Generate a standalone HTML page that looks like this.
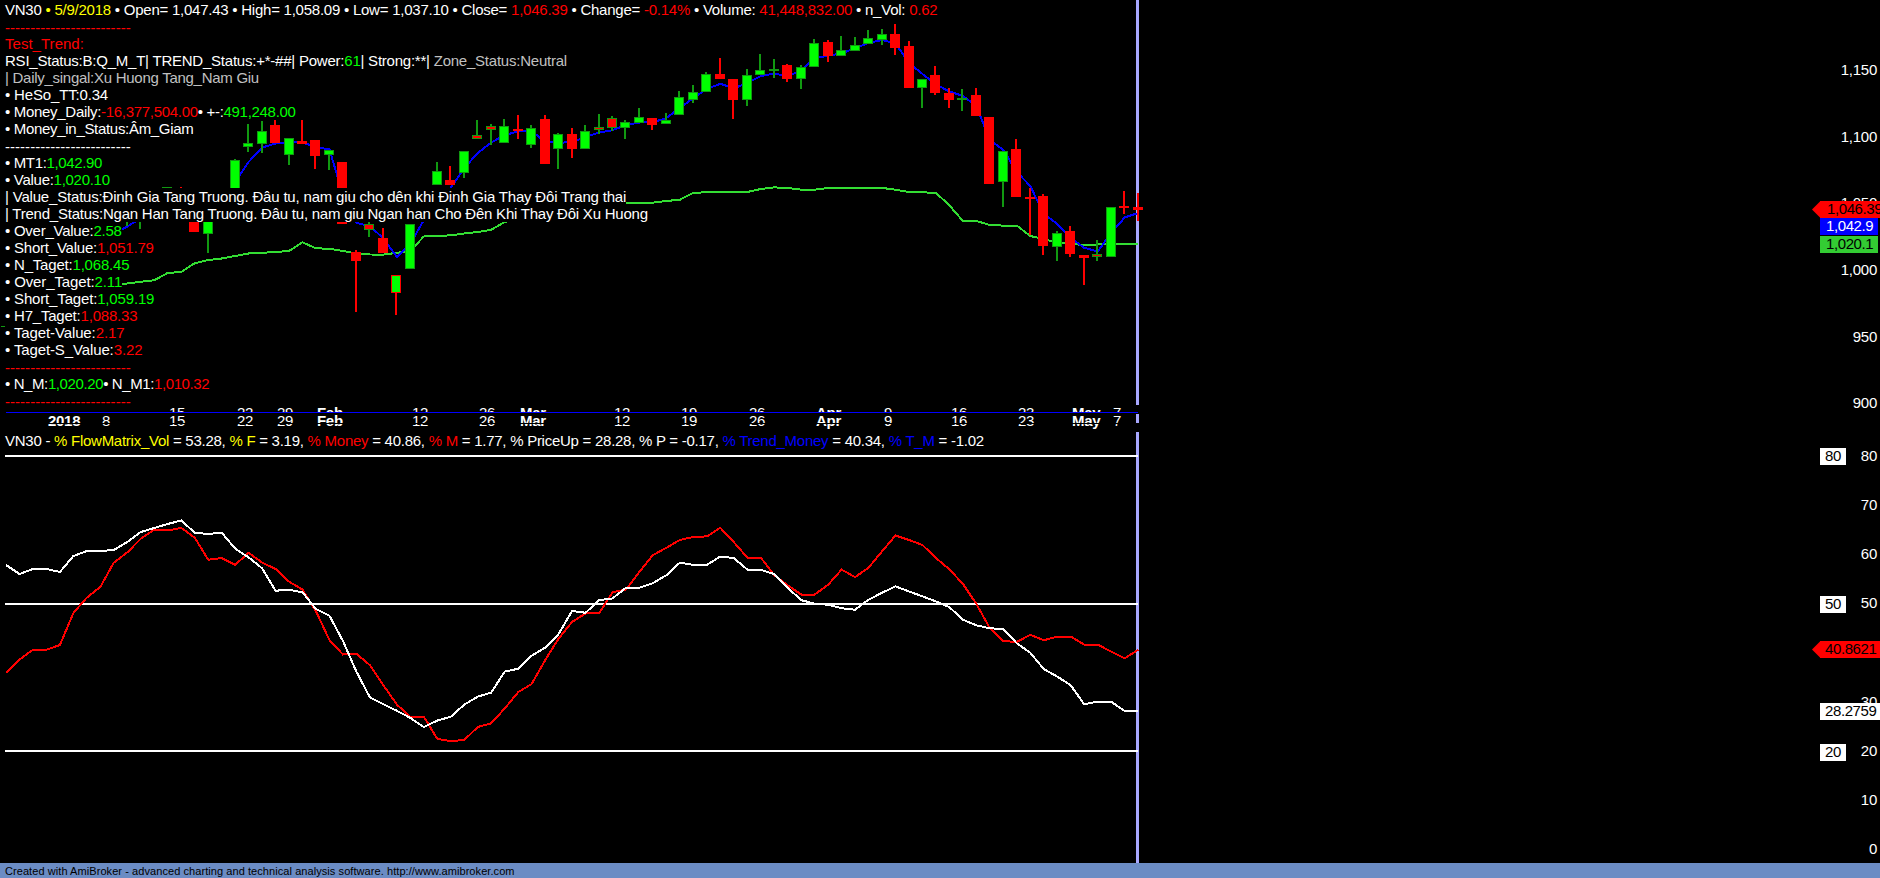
<!DOCTYPE html>
<html><head><meta charset="utf-8">
<style>
html,body{margin:0;padding:0;background:#000;width:1880px;height:878px;overflow:hidden;position:relative}
body{font-family:"Liberation Sans",sans-serif;}
.t{position:absolute;left:5px;height:17px;line-height:17px;font-size:15px;white-space:nowrap;background:#000}
.xl{position:absolute;font-size:15px;line-height:17px;color:#fff;white-space:nowrap;letter-spacing:-0.3px}
.yl{position:absolute;right:3px;font-size:15px;line-height:17px;color:#fff;white-space:nowrap;text-align:right;letter-spacing:-0.25px}
.lbl{position:absolute;font-size:15px;line-height:15px;white-space:nowrap;box-sizing:border-box;letter-spacing:-0.4px;overflow:hidden}
.vl{position:absolute;left:1136px;width:3px;background:#a8a8ff}
</style></head><body>
<div class="vl" style="top:0;height:405px"></div>
<div class="vl" style="top:414px;height:9px"></div>
<div class="vl" style="top:432px;height:431px"></div>
<div style="position:absolute;left:0;top:0;width:1880px;height:410px;overflow:hidden"><svg width="1880" height="878" style="position:absolute;left:0;top:0" shape-rendering="crispEdges">
<polyline fill="none" stroke="#33dd33" stroke-width="2" points="100.3,290.1 113.8,285.0 127.3,283.5 140.8,281.7 154.3,280.3 167.7,272.9 181.2,272.1 194.7,263.2 208.2,260.0 221.6,258.5 235.1,256.0 248.6,253.5 262.1,252.8 275.6,252.0 289.0,251.0 302.5,242.3 316.0,248.3 329.5,248.8 342.9,251.0 356.4,253.5 369.9,254.5 383.4,254.6 396.9,252.8 410.3,251.0 423.8,236.5 437.3,236.0 450.8,235.3 464.3,233.5 477.7,232.0 491.2,229.8 504.7,222.0 518.2,218.0 531.6,215.0 545.1,212.0 558.6,210.0 572.1,208.0 585.6,206.0 599.0,205.0 612.5,204.0 626.0,203.2 639.5,203.0 652.9,202.6 666.4,201.0 679.9,199.7 693.4,192.9 706.9,192.2 720.3,192.0 733.8,192.0 747.3,192.0 760.8,189.0 774.2,187.4 787.7,188.0 801.2,189.7 814.7,189.7 828.2,187.9 841.6,187.9 855.1,187.9 868.6,187.9 882.1,187.9 895.5,189.7 909.0,192.0 922.5,192.3 936.0,192.9 949.5,205.5 962.9,221.0 976.4,221.0 989.9,225.0 1003.4,225.6 1016.8,225.6 1030.3,236.0 1043.8,239.0 1057.3,242.7 1070.8,244.0 1084.2,245.0 1097.7,244.5 1111.2,244.2 1124.7,244.1 1138.2,244.1"/>
<rect x="1" y="326" width="4" height="1" fill="#119911"/>
<polyline fill="none" stroke="#0000ff" stroke-width="2" points="113.8,234.0 127.3,226.5 140.8,218.0 154.3,212.0 167.7,208.0 181.2,205.0 194.7,203.0 208.2,203.0 221.6,205.0 235.1,182.0 248.6,162.0 262.1,147.5 275.6,143.5 289.0,142.0 302.5,142.5 316.0,147.0 329.5,149.5 342.9,195.0 356.4,223.0 369.9,226.0 383.4,238.5 396.9,257.0 410.3,244.0 423.8,220.0 437.3,203.0 450.8,187.7 464.3,168.0 477.7,153.0 491.2,142.5 504.7,135.0 518.2,131.5 531.6,131.0 545.1,141.8 558.6,142.8 572.1,142.0 585.6,137.0 599.0,132.5 612.5,130.2 626.0,125.0 639.5,122.5 652.9,122.3 666.4,118.0 679.9,108.0 693.4,98.0 706.9,89.0 720.3,83.8 733.8,88.3 747.3,83.0 760.8,76.0 774.2,73.5 787.7,76.5 801.2,70.0 814.7,58.5 828.2,55.5 841.6,53.5 855.1,48.0 868.6,43.0 882.1,40.0 895.5,43.5 909.0,63.0 922.5,74.0 936.0,84.5 949.5,91.5 962.9,96.0 976.4,106.0 989.9,140.0 1003.4,150.0 1016.8,172.0 1030.3,186.0 1043.8,214.0 1057.3,224.0 1070.8,238.0 1084.2,247.8 1097.7,251.5 1111.2,233.0 1124.7,217.5 1138.2,213.0"/>
<rect x="126" y="215" width="2" height="11" fill="#119911"/>
<rect x="139" y="215" width="2" height="14" fill="#119911"/>
<rect x="166" y="187" width="2" height="18" fill="#119911"/>
<rect x="162" y="187" width="10" height="18" fill="#119911"/>
<rect x="163" y="188" width="8" height="16" fill="#00ff00"/>
<rect x="180" y="187" width="2" height="18" fill="#ff0000"/>
<rect x="176" y="195" width="10" height="10" fill="#ff0000"/>
<rect x="177" y="196" width="8" height="8" fill="#ff0000"/>
<rect x="193" y="210" width="2" height="22" fill="#ff0000"/>
<rect x="189" y="210" width="10" height="22" fill="#ff0000"/>
<rect x="190" y="211" width="8" height="20" fill="#ff0000"/>
<rect x="207" y="210" width="2" height="43" fill="#119911"/>
<rect x="203" y="210" width="10" height="24" fill="#119911"/>
<rect x="204" y="211" width="8" height="22" fill="#00ff00"/>
<rect x="234" y="159" width="2" height="41" fill="#119911"/>
<rect x="230" y="160" width="10" height="40" fill="#119911"/>
<rect x="231" y="161" width="8" height="38" fill="#00ff00"/>
<rect x="247" y="124" width="2" height="28" fill="#119911"/>
<rect x="243" y="143" width="10" height="4" fill="#119911"/>
<rect x="244" y="144" width="8" height="2" fill="#00ff00"/>
<rect x="261" y="121" width="2" height="32" fill="#119911"/>
<rect x="257" y="131" width="10" height="13" fill="#119911"/>
<rect x="258" y="132" width="8" height="11" fill="#00ff00"/>
<rect x="274" y="120" width="2" height="23" fill="#ff0000"/>
<rect x="270" y="125" width="10" height="18" fill="#ff0000"/>
<rect x="271" y="126" width="8" height="16" fill="#ff0000"/>
<rect x="288" y="138" width="2" height="27" fill="#119911"/>
<rect x="284" y="138" width="10" height="17" fill="#119911"/>
<rect x="285" y="139" width="8" height="15" fill="#00ff00"/>
<rect x="301" y="120" width="2" height="24" fill="#ff0000"/>
<rect x="297" y="141" width="10" height="3" fill="#ff0000"/>
<rect x="298" y="142" width="8" height="1" fill="#ff0000"/>
<rect x="314" y="140" width="2" height="29" fill="#ff0000"/>
<rect x="310" y="140" width="10" height="16" fill="#ff0000"/>
<rect x="311" y="141" width="8" height="14" fill="#ff0000"/>
<rect x="328" y="150" width="2" height="20" fill="#119911"/>
<rect x="324" y="150" width="10" height="5" fill="#119911"/>
<rect x="325" y="151" width="8" height="3" fill="#00ff00"/>
<rect x="341" y="162" width="2" height="62" fill="#ff0000"/>
<rect x="337" y="162" width="10" height="62" fill="#ff0000"/>
<rect x="338" y="163" width="8" height="60" fill="#ff0000"/>
<rect x="355" y="250" width="2" height="62" fill="#ff0000"/>
<rect x="351" y="252" width="10" height="9" fill="#ff0000"/>
<rect x="352" y="253" width="8" height="7" fill="#ff0000"/>
<rect x="368" y="222" width="2" height="15" fill="#119911"/>
<rect x="364" y="224" width="10" height="6" fill="#119911"/>
<rect x="365" y="225" width="8" height="4" fill="#ff0000"/>
<rect x="382" y="228" width="2" height="25" fill="#ff0000"/>
<rect x="378" y="238" width="10" height="15" fill="#ff0000"/>
<rect x="379" y="239" width="8" height="13" fill="#ff0000"/>
<rect x="395" y="275" width="2" height="40" fill="#ff0000"/>
<rect x="391" y="275" width="10" height="18" fill="#ff0000"/>
<rect x="392" y="276" width="8" height="16" fill="#00ff00"/>
<rect x="409" y="224" width="2" height="45" fill="#119911"/>
<rect x="405" y="224" width="10" height="45" fill="#119911"/>
<rect x="406" y="225" width="8" height="43" fill="#00ff00"/>
<rect x="436" y="162" width="2" height="23" fill="#119911"/>
<rect x="432" y="171" width="10" height="14" fill="#119911"/>
<rect x="433" y="172" width="8" height="12" fill="#00ff00"/>
<rect x="449" y="166" width="2" height="19" fill="#ff0000"/>
<rect x="445" y="180" width="10" height="5" fill="#ff0000"/>
<rect x="446" y="181" width="8" height="3" fill="#ff0000"/>
<rect x="463" y="151" width="2" height="27" fill="#119911"/>
<rect x="459" y="151" width="10" height="22" fill="#119911"/>
<rect x="460" y="152" width="8" height="20" fill="#00ff00"/>
<rect x="476" y="120" width="2" height="19" fill="#119911"/>
<rect x="472" y="135" width="10" height="4" fill="#119911"/>
<rect x="473" y="136" width="8" height="2" fill="#ff0000"/>
<rect x="490" y="124" width="2" height="21" fill="#119911"/>
<rect x="486" y="126" width="10" height="4" fill="#119911"/>
<rect x="487" y="127" width="8" height="2" fill="#ff0000"/>
<rect x="503" y="119" width="2" height="24" fill="#119911"/>
<rect x="499" y="126" width="10" height="17" fill="#119911"/>
<rect x="500" y="127" width="8" height="15" fill="#00ff00"/>
<rect x="517" y="115" width="2" height="24" fill="#ff0000"/>
<rect x="513" y="129" width="10" height="2" fill="#ff0000"/>
<rect x="530" y="125" width="2" height="23" fill="#119911"/>
<rect x="526" y="128" width="10" height="17" fill="#119911"/>
<rect x="527" y="129" width="8" height="15" fill="#00ff00"/>
<rect x="544" y="115" width="2" height="49" fill="#ff0000"/>
<rect x="540" y="119" width="10" height="45" fill="#ff0000"/>
<rect x="541" y="120" width="8" height="43" fill="#ff0000"/>
<rect x="557" y="133" width="2" height="36" fill="#119911"/>
<rect x="553" y="134" width="10" height="15" fill="#119911"/>
<rect x="554" y="135" width="8" height="13" fill="#00ff00"/>
<rect x="571" y="128" width="2" height="30" fill="#ff0000"/>
<rect x="567" y="134" width="10" height="15" fill="#ff0000"/>
<rect x="568" y="135" width="8" height="13" fill="#ff0000"/>
<rect x="584" y="125" width="2" height="24" fill="#119911"/>
<rect x="580" y="131" width="10" height="18" fill="#119911"/>
<rect x="581" y="132" width="8" height="16" fill="#00ff00"/>
<rect x="598" y="114" width="2" height="20" fill="#119911"/>
<rect x="594" y="127" width="10" height="3" fill="#119911"/>
<rect x="595" y="128" width="8" height="1" fill="#ff0000"/>
<rect x="611" y="116" width="2" height="15" fill="#119911"/>
<rect x="607" y="118" width="10" height="10" fill="#119911"/>
<rect x="608" y="119" width="8" height="8" fill="#ff0000"/>
<rect x="624" y="120" width="2" height="19" fill="#119911"/>
<rect x="620" y="122" width="10" height="6" fill="#119911"/>
<rect x="621" y="123" width="8" height="4" fill="#00ff00"/>
<rect x="638" y="108" width="2" height="15" fill="#119911"/>
<rect x="634" y="117" width="10" height="6" fill="#119911"/>
<rect x="635" y="118" width="8" height="4" fill="#00ff00"/>
<rect x="651" y="118" width="2" height="12" fill="#ff0000"/>
<rect x="647" y="118" width="10" height="7" fill="#ff0000"/>
<rect x="648" y="119" width="8" height="5" fill="#ff0000"/>
<rect x="665" y="113" width="2" height="11" fill="#119911"/>
<rect x="661" y="120" width="10" height="4" fill="#119911"/>
<rect x="662" y="121" width="8" height="2" fill="#00ff00"/>
<rect x="678" y="91" width="2" height="24" fill="#119911"/>
<rect x="674" y="97" width="10" height="18" fill="#119911"/>
<rect x="675" y="98" width="8" height="16" fill="#00ff00"/>
<rect x="692" y="85" width="2" height="18" fill="#119911"/>
<rect x="688" y="92" width="10" height="8" fill="#119911"/>
<rect x="689" y="93" width="8" height="6" fill="#00ff00"/>
<rect x="705" y="72" width="2" height="20" fill="#119911"/>
<rect x="701" y="74" width="10" height="18" fill="#119911"/>
<rect x="702" y="75" width="8" height="16" fill="#00ff00"/>
<rect x="719" y="58" width="2" height="21" fill="#ff0000"/>
<rect x="715" y="74" width="10" height="5" fill="#ff0000"/>
<rect x="716" y="75" width="8" height="3" fill="#ff0000"/>
<rect x="732" y="79" width="2" height="40" fill="#ff0000"/>
<rect x="728" y="79" width="10" height="21" fill="#ff0000"/>
<rect x="729" y="80" width="8" height="19" fill="#ff0000"/>
<rect x="746" y="69" width="2" height="37" fill="#119911"/>
<rect x="742" y="75" width="10" height="25" fill="#119911"/>
<rect x="743" y="76" width="8" height="23" fill="#00ff00"/>
<rect x="759" y="54" width="2" height="21" fill="#119911"/>
<rect x="755" y="70" width="10" height="5" fill="#119911"/>
<rect x="756" y="71" width="8" height="3" fill="#00ff00"/>
<rect x="773" y="59" width="2" height="19" fill="#119911"/>
<rect x="769" y="69" width="10" height="2" fill="#119911"/>
<rect x="786" y="64" width="2" height="18" fill="#ff0000"/>
<rect x="782" y="65" width="10" height="14" fill="#ff0000"/>
<rect x="783" y="66" width="8" height="12" fill="#ff0000"/>
<rect x="800" y="65" width="2" height="24" fill="#119911"/>
<rect x="796" y="67" width="10" height="12" fill="#119911"/>
<rect x="797" y="68" width="8" height="10" fill="#00ff00"/>
<rect x="813" y="39" width="2" height="28" fill="#119911"/>
<rect x="809" y="43" width="10" height="24" fill="#119911"/>
<rect x="810" y="44" width="8" height="22" fill="#00ff00"/>
<rect x="827" y="40" width="2" height="22" fill="#ff0000"/>
<rect x="823" y="42" width="10" height="14" fill="#ff0000"/>
<rect x="824" y="43" width="8" height="12" fill="#ff0000"/>
<rect x="840" y="36" width="2" height="20" fill="#119911"/>
<rect x="836" y="50" width="10" height="6" fill="#119911"/>
<rect x="837" y="51" width="8" height="4" fill="#00ff00"/>
<rect x="854" y="37" width="2" height="14" fill="#119911"/>
<rect x="850" y="45" width="10" height="6" fill="#119911"/>
<rect x="851" y="46" width="8" height="4" fill="#00ff00"/>
<rect x="867" y="30" width="2" height="14" fill="#119911"/>
<rect x="863" y="38" width="10" height="6" fill="#119911"/>
<rect x="864" y="39" width="8" height="4" fill="#00ff00"/>
<rect x="881" y="29" width="2" height="16" fill="#119911"/>
<rect x="877" y="34" width="10" height="6" fill="#119911"/>
<rect x="878" y="35" width="8" height="4" fill="#00ff00"/>
<rect x="894" y="24" width="2" height="31" fill="#ff0000"/>
<rect x="890" y="34" width="10" height="14" fill="#ff0000"/>
<rect x="891" y="35" width="8" height="12" fill="#ff0000"/>
<rect x="908" y="41" width="2" height="47" fill="#ff0000"/>
<rect x="904" y="46" width="10" height="42" fill="#ff0000"/>
<rect x="905" y="47" width="8" height="40" fill="#ff0000"/>
<rect x="921" y="79" width="2" height="29" fill="#119911"/>
<rect x="917" y="79" width="10" height="9" fill="#119911"/>
<rect x="918" y="80" width="8" height="7" fill="#00ff00"/>
<rect x="934" y="66" width="2" height="29" fill="#ff0000"/>
<rect x="930" y="75" width="10" height="18" fill="#ff0000"/>
<rect x="931" y="76" width="8" height="16" fill="#ff0000"/>
<rect x="948" y="88" width="2" height="20" fill="#ff0000"/>
<rect x="944" y="93" width="10" height="7" fill="#ff0000"/>
<rect x="945" y="94" width="8" height="5" fill="#ff0000"/>
<rect x="961" y="89" width="2" height="22" fill="#119911"/>
<rect x="957" y="98" width="10" height="2" fill="#119911"/>
<rect x="975" y="88" width="2" height="28" fill="#ff0000"/>
<rect x="971" y="95" width="10" height="21" fill="#ff0000"/>
<rect x="972" y="96" width="8" height="19" fill="#ff0000"/>
<rect x="988" y="117" width="2" height="67" fill="#ff0000"/>
<rect x="984" y="117" width="10" height="67" fill="#ff0000"/>
<rect x="985" y="118" width="8" height="65" fill="#ff0000"/>
<rect x="1002" y="151" width="2" height="56" fill="#119911"/>
<rect x="998" y="151" width="10" height="31" fill="#119911"/>
<rect x="999" y="152" width="8" height="29" fill="#00ff00"/>
<rect x="1015" y="139" width="2" height="58" fill="#ff0000"/>
<rect x="1011" y="149" width="10" height="48" fill="#ff0000"/>
<rect x="1012" y="150" width="8" height="46" fill="#ff0000"/>
<rect x="1029" y="188" width="2" height="47" fill="#ff0000"/>
<rect x="1025" y="197" width="10" height="2" fill="#ff0000"/>
<rect x="1042" y="194" width="2" height="61" fill="#ff0000"/>
<rect x="1038" y="196" width="10" height="50" fill="#ff0000"/>
<rect x="1039" y="197" width="8" height="48" fill="#ff0000"/>
<rect x="1056" y="231" width="2" height="30" fill="#119911"/>
<rect x="1052" y="233" width="10" height="14" fill="#119911"/>
<rect x="1053" y="234" width="8" height="12" fill="#00ff00"/>
<rect x="1069" y="226" width="2" height="31" fill="#ff0000"/>
<rect x="1065" y="231" width="10" height="23" fill="#ff0000"/>
<rect x="1066" y="232" width="8" height="21" fill="#ff0000"/>
<rect x="1083" y="255" width="2" height="30" fill="#ff0000"/>
<rect x="1079" y="255" width="10" height="3" fill="#ff0000"/>
<rect x="1080" y="256" width="8" height="1" fill="#ff0000"/>
<rect x="1096" y="240" width="2" height="21" fill="#119911"/>
<rect x="1092" y="254" width="10" height="3" fill="#119911"/>
<rect x="1093" y="255" width="8" height="1" fill="#ff0000"/>
<rect x="1110" y="207" width="2" height="50" fill="#119911"/>
<rect x="1106" y="207" width="10" height="50" fill="#119911"/>
<rect x="1107" y="208" width="8" height="48" fill="#00ff00"/>
<rect x="1123" y="191" width="2" height="23" fill="#ff0000"/>
<rect x="1119" y="206" width="10" height="2" fill="#ff0000"/>
<rect x="1137" y="193" width="2" height="28" fill="#ff0000"/>
<rect x="1133" y="207" width="10" height="3" fill="#ff0000"/>
<rect x="1134" y="208" width="8" height="1" fill="#ff0000"/>
</svg></div>

<svg width="1880" height="878" style="position:absolute;left:0;top:0" shape-rendering="crispEdges">
<rect x="5" y="455" width="1133" height="2" fill="#fff"/>
<rect x="5" y="603" width="1133" height="2" fill="#fff"/>
<rect x="5" y="750" width="1133" height="2" fill="#fff"/>
<polyline fill="none" stroke="#ff0000" stroke-width="2" points="6.0,673.0 19.5,659.5 33.0,649.7 46.4,649.7 59.9,645.0 73.4,613.0 86.9,597.5 100.3,587.0 113.8,562.6 127.3,552.4 140.8,538.7 154.3,529.6 167.7,530.5 181.2,527.8 194.7,537.6 208.2,559.7 221.6,558.1 235.1,564.9 248.6,552.8 262.1,562.6 275.6,569.0 289.0,581.6 302.5,589.6 316.0,611.3 329.5,640.2 342.9,654.5 356.4,653.8 369.9,665.2 383.4,685.3 396.9,704.6 410.3,716.7 423.8,716.7 437.3,738.8 450.8,741.1 464.3,740.0 477.7,727.0 491.2,723.3 504.7,708.5 518.2,692.1 531.6,684.1 545.1,660.2 558.6,638.6 572.1,621.9 585.6,613.4 599.0,613.4 612.5,592.3 626.0,589.5 639.5,571.8 652.9,555.1 666.4,547.8 679.9,539.9 693.4,536.9 706.9,536.4 720.3,527.8 733.8,542.1 747.3,557.6 760.8,557.6 774.2,575.2 787.7,585.4 801.2,594.5 814.7,594.5 828.2,584.7 841.6,569.6 855.1,577.1 868.6,567.6 882.1,551.3 895.5,535.5 909.0,540.0 922.5,545.0 936.0,558.1 949.5,569.4 962.9,583.9 976.4,604.0 989.9,628.3 1003.4,641.0 1016.8,642.0 1030.3,634.8 1043.8,640.3 1057.3,636.5 1070.8,636.5 1084.2,644.6 1097.7,644.6 1111.2,651.6 1124.7,658.3 1138.2,649.8"/>
<polyline fill="none" stroke="#ffffff" stroke-width="2" points="6.0,565.0 19.5,574.0 33.0,569.0 46.4,569.0 59.9,572.0 73.4,556.0 86.9,551.0 100.3,551.0 113.8,550.0 127.3,542.0 140.8,532.0 154.3,528.0 167.7,524.0 181.2,520.5 194.7,532.6 208.2,534.0 221.6,532.6 235.1,548.5 248.6,557.4 262.1,568.3 275.6,590.7 289.0,589.8 302.5,592.3 316.0,609.0 329.5,615.8 342.9,640.9 356.4,671.6 369.9,697.4 383.4,704.2 396.9,710.8 410.3,717.9 423.8,727.0 437.3,720.6 450.8,716.7 464.3,704.6 477.7,696.7 491.2,692.6 504.7,671.6 518.2,668.7 531.6,655.7 545.1,647.7 558.6,634.0 572.1,610.9 585.6,612.8 599.0,600.2 612.5,598.4 626.0,587.7 639.5,587.7 652.9,583.1 666.4,575.2 679.9,562.6 693.4,564.9 706.9,564.9 720.3,556.5 733.8,558.1 747.3,569.5 760.8,569.9 774.2,574.0 787.7,587.7 801.2,600.2 814.7,603.6 828.2,604.8 841.6,608.2 855.1,609.7 868.6,599.7 882.1,592.7 895.5,586.4 909.0,591.4 922.5,596.4 936.0,601.5 949.5,607.2 962.9,619.7 976.4,625.3 989.9,628.3 1003.4,629.0 1016.8,643.3 1030.3,652.8 1043.8,669.1 1057.3,676.6 1070.8,685.4 1084.2,704.2 1097.7,701.7 1111.2,701.7 1124.7,711.0 1138.2,711.0"/>
</svg>
<div style="position:absolute;left:0;top:405px;width:1136px;height:7px;overflow:hidden"><div class="xl" style="left:169px;top:-1px;font-weight:normal">15</div><div class="xl" style="left:237px;top:-1px;font-weight:normal">22</div><div class="xl" style="left:277px;top:-1px;font-weight:normal">29</div><div class="xl" style="left:317px;top:-1px;font-weight:bold">Feb</div><div class="xl" style="left:412px;top:-1px;font-weight:normal">12</div><div class="xl" style="left:479px;top:-1px;font-weight:normal">26</div><div class="xl" style="left:520px;top:-1px;font-weight:bold">Mar</div><div class="xl" style="left:614px;top:-1px;font-weight:normal">12</div><div class="xl" style="left:681px;top:-1px;font-weight:normal">19</div><div class="xl" style="left:749px;top:-1px;font-weight:normal">26</div><div class="xl" style="left:816px;top:-1px;font-weight:bold">Apr</div><div class="xl" style="left:884px;top:-1px;font-weight:normal">9</div><div class="xl" style="left:951px;top:-1px;font-weight:normal">16</div><div class="xl" style="left:1018px;top:-1px;font-weight:normal">23</div><div class="xl" style="left:1072px;top:-1px;font-weight:bold">May</div><div class="xl" style="left:1113px;top:-1px;font-weight:normal">7</div></div>
<div class="t" style="top:1px;letter-spacing:-0.241px"><span style="color:#ffffff">VN30</span><span style="color:#ffff00"> • 5/9/2018</span><span style="color:#ffffff"> • Open= 1,047.43 • High= 1,058.09 • Low= 1,037.10 • Close= </span><span style="color:#ff0000">1,046.39</span><span style="color:#ffffff"> • Change= </span><span style="color:#ff0000">-0.14%</span><span style="color:#ffffff"> • Volume: </span><span style="color:#ff0000">41,448,832.00</span><span style="color:#ffffff"> • n_Vol: </span><span style="color:#ff0000">0.62</span></div>
<div class="t" style="top:18px;letter-spacing:0.034px;padding-top:1px;height:16px"><span style="color:#ff0000">-------------------------</span></div>
<div class="t" style="top:35px;letter-spacing:0.025px"><span style="color:#ff0000">Test_Trend:</span></div>
<div class="t" style="top:52px;letter-spacing:-0.228px"><span style="color:#ffffff">RSI_Status:B:Q_M_T| TREND_Status:+*-##| Power:</span><span style="color:#00ff00">61</span><span style="color:#ffffff">| Strong:**|</span><span style="color:#c0c0c0"> Zone_Status:Neutral</span></div>
<div class="t" style="top:69px;letter-spacing:-0.273px"><span style="color:#c0c0c0">| Daily_singal:Xu Huong Tang_Nam Giu</span></div>
<div class="t" style="top:86px;letter-spacing:-0.163px"><span style="color:#ffffff">• HeSo_TT:0.34</span></div>
<div class="t" style="top:103px;letter-spacing:-0.304px"><span style="color:#ffffff">• Money_Daily:</span><span style="color:#ff0000">-16,377,504.00</span><span style="color:#ffffff">• +-:</span><span style="color:#00ff00">491,248.00</span></div>
<div class="t" style="top:120px;letter-spacing:-0.308px"><span style="color:#ffffff">• Money_in_Status:Âm_Giam</span></div>
<div class="t" style="top:137px;letter-spacing:0.034px;padding-top:1px;height:16px"><span style="color:#ffffff">-------------------------</span></div>
<div class="t" style="top:154px;letter-spacing:-0.353px"><span style="color:#ffffff">• MT1:</span><span style="color:#00ff00">1,042.90</span></div>
<div class="t" style="top:171px;letter-spacing:-0.282px"><span style="color:#ffffff">• Value:</span><span style="color:#00ff00">1,020.10</span></div>
<div class="t" style="top:188px;letter-spacing:-0.186px"><span style="color:#ffffff">| Value_Status:Đinh Gia Tang Truong. Đâu tu, nam giu cho dên khi Đinh Gia Thay Đôi Trang thai</span></div>
<div class="t" style="top:205px;letter-spacing:-0.231px"><span style="color:#ffffff">| Trend_Status:Ngan Han Tang Truong. Đâu tu, nam giu Ngan han Cho Đên Khi Thay Đôi Xu Huong</span></div>
<div class="t" style="top:222px;letter-spacing:-0.249px"><span style="color:#ffffff">• Over_Value:</span><span style="color:#00ff00">2.58</span></div>
<div class="t" style="top:239px;letter-spacing:-0.216px"><span style="color:#ffffff">• Short_Value:</span><span style="color:#ff0000">1,051.79</span></div>
<div class="t" style="top:256px;letter-spacing:-0.198px"><span style="color:#ffffff">• N_Taget:</span><span style="color:#00ff00">1,068.45</span></div>
<div class="t" style="top:273px;letter-spacing:-0.121px"><span style="color:#ffffff">• Over_Taget:</span><span style="color:#00ff00">2.11</span></div>
<div class="t" style="top:290px;letter-spacing:-0.165px"><span style="color:#ffffff">• Short_Taget:</span><span style="color:#00ff00">1,059.19</span></div>
<div class="t" style="top:307px;letter-spacing:-0.206px"><span style="color:#ffffff">• H7_Taget:</span><span style="color:#ff0000">1,088.33</span></div>
<div class="t" style="top:324px;letter-spacing:-0.115px"><span style="color:#ffffff">• Taget-Value:</span><span style="color:#ff0000">2.17</span></div>
<div class="t" style="top:341px;letter-spacing:-0.122px"><span style="color:#ffffff">• Taget-S_Value:</span><span style="color:#ff0000">3.22</span></div>
<div class="t" style="top:358px;letter-spacing:0.034px;padding-top:1px;height:16px"><span style="color:#ff0000">-------------------------</span></div>
<div class="t" style="top:375px;letter-spacing:-0.395px"><span style="color:#ffffff">• N_M:</span><span style="color:#00ff00">1,020.20</span><span style="color:#ffffff">• N_M1:</span><span style="color:#ff0000">1,010.32</span></div>
<div class="t" style="top:392px;letter-spacing:0.034px;padding-top:1px;height:16px"><span style="color:#ff0000">-------------------------</span></div>
<div style="position:absolute;left:6px;top:412px;width:1132px;height:1px;background:#0000ff"></div>
<div class="xl" style="left:48px;top:412px;font-weight:bold">2018</div>
<div class="xl" style="left:102px;top:412px;font-weight:normal">8</div>
<div class="xl" style="left:169px;top:412px;font-weight:normal">15</div>
<div class="xl" style="left:237px;top:412px;font-weight:normal">22</div>
<div class="xl" style="left:277px;top:412px;font-weight:normal">29</div>
<div class="xl" style="left:317px;top:412px;font-weight:bold">Feb</div>
<div class="xl" style="left:412px;top:412px;font-weight:normal">12</div>
<div class="xl" style="left:479px;top:412px;font-weight:normal">26</div>
<div class="xl" style="left:520px;top:412px;font-weight:bold">Mar</div>
<div class="xl" style="left:614px;top:412px;font-weight:normal">12</div>
<div class="xl" style="left:681px;top:412px;font-weight:normal">19</div>
<div class="xl" style="left:749px;top:412px;font-weight:normal">26</div>
<div class="xl" style="left:816px;top:412px;font-weight:bold">Apr</div>
<div class="xl" style="left:884px;top:412px;font-weight:normal">9</div>
<div class="xl" style="left:951px;top:412px;font-weight:normal">16</div>
<div class="xl" style="left:1018px;top:412px;font-weight:normal">23</div>
<div class="xl" style="left:1072px;top:412px;font-weight:bold">May</div>
<div class="xl" style="left:1113px;top:412px;font-weight:normal">7</div><div style="position:absolute;left:0;top:423px;width:1136px;height:1px;background:#000"></div>
<div class="t" style="top:432px;letter-spacing:-0.261px"><span style="color:#ffffff">VN30 - </span><span style="color:#ffff00">% FlowMatrix_Vol</span><span style="color:#ffffff"> = 53.28, </span><span style="color:#ffff00">% F</span><span style="color:#ffffff"> = 3.19, </span><span style="color:#ff0000">% Money</span><span style="color:#ffffff"> = 40.86, </span><span style="color:#ff0000">% M</span><span style="color:#ffffff"> = 1.77, % PriceUp = 28.28, % P = -0.17, </span><span style="color:#0000ff">% Trend_Money</span><span style="color:#ffffff"> = 40.34, </span><span style="color:#0000ff">% T_M</span><span style="color:#ffffff"> = -1.02</span></div>
<div class="yl" style="top:61px">1,150</div>
<div class="yl" style="top:128px">1,100</div>
<div class="yl" style="top:194px">1,050</div>
<div class="yl" style="top:261px">1,000</div>
<div class="yl" style="top:328px">950</div>
<div class="yl" style="top:394px">900</div>
<div class="yl" style="top:447px">80</div>
<div class="yl" style="top:496px">70</div>
<div class="yl" style="top:545px">60</div>
<div class="yl" style="top:594px">50</div>
<div class="yl" style="top:693px">30</div>
<div class="yl" style="top:742px">20</div>
<div class="yl" style="top:791px">10</div>
<div class="yl" style="top:840px">0</div>
<div class="lbl" style="left:1820px;top:201px;width:60px;height:17px;background:#ff0000;color:#000;padding-left:7px">1,046.39</div>
<svg style="position:absolute;left:1812px;top:201px" width="9" height="17"><polygon points="0,8.5 8.5,0 9,0 9,17 8.5,17" fill="#ff0000"/></svg>
<div class="lbl" style="left:1820px;top:218px;width:58px;height:17px;background:#0000ff;color:#fff;padding-left:6px">1,042.9</div>
<div class="lbl" style="left:1820px;top:236px;width:58px;height:17px;background:#33cc33;color:#000;padding-left:6px">1,020.1</div>
<div class="lbl" style="left:1820px;top:448px;width:26px;height:17px;background:#fff;color:#000;padding-left:5px">80</div>
<div class="lbl" style="left:1820px;top:596px;width:26px;height:17px;background:#fff;color:#000;padding-left:5px">50</div>
<div class="lbl" style="left:1820px;top:744px;width:26px;height:17px;background:#fff;color:#000;padding-left:5px">20</div>
<div class="lbl" style="left:1820px;top:641px;width:60px;height:17px;background:#ff0000;color:#000;padding-left:5px">40.8621</div>
<svg style="position:absolute;left:1812px;top:641px" width="9" height="17"><polygon points="0,8.5 8.5,0 9,0 9,17 8.5,17" fill="#ff0000"/></svg>
<div class="lbl" style="left:1820px;top:703px;width:60px;height:17px;background:#fff;color:#000;padding-left:5px">28.2759</div>
<div style="position:absolute;left:0;top:863px;width:1880px;height:15px;background:#6b8cc4;font-size:11px;line-height:17px;color:#000;padding-left:5px;box-sizing:border-box;letter-spacing:0.07px;overflow:hidden">Created with AmiBroker - advanced charting and technical analysis software. http://www.amibroker.com</div>
</body></html>
